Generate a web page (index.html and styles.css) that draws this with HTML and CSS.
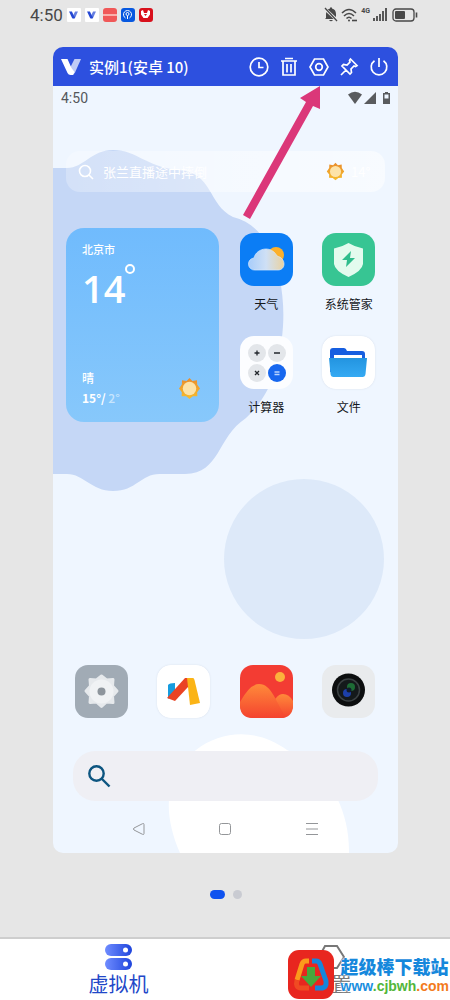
FILE: index.html
```html
<!DOCTYPE html>
<html lang="zh-CN">
<head>
  <meta charset="UTF-8" />
  <meta name="viewport" content="width=device-width, initial-scale=1" />
  <title>虚拟机</title>
  <link rel="stylesheet" href="styles.css">
</head>
<body>
<!-- Shared shapes -->
<svg class="defs" width="0" height="0" aria-hidden="true">
  <defs>
    <linearGradient id="sunFill" x1="0" y1="0" x2="0" y2="1">
      <stop offset="0" stop-color="#e98c2c"/><stop offset="1" stop-color="#f6bd2f"/>
    </linearGradient>
    <linearGradient id="cloudFill" x1="0" y1="0" x2="1" y2="0">
      <stop offset="0" stop-color="#a9cdfa"/><stop offset=".5" stop-color="#cfe0f5"/><stop offset="1" stop-color="#ead2a0"/>
    </linearGradient>
    <linearGradient id="folderFill" x1="0" y1="0" x2="0" y2="1">
      <stop offset="0" stop-color="#2394e0"/><stop offset="1" stop-color="#35aaf3"/>
    </linearGradient>
    <linearGradient id="hillFill" x1="0" y1="0" x2="0" y2="1">
      <stop offset="0" stop-color="#ff8a3a"/><stop offset="1" stop-color="#f4432f"/>
    </linearGradient>
    <linearGradient id="vmFill" x1="0" y1="0" x2="1" y2="0">
      <stop offset="0" stop-color="#6f8cff"/><stop offset="1" stop-color="#1f45dc"/>
    </linearGradient>
    <symbol id="sun" viewBox="0 0 24 24">
      <path fill="url(#sunFill)" d="M12 1l3 3.200 4.800-.9.2 4.400L23 12l-3 3.800.2 4.200-4.700.2L12 23l-3.500-2.800-4.700-.2.2-4.200L1 12l3-4.300.2-4.400 4.800.9z"/>
      <circle cx="12" cy="12" r="7" fill="#fde3a8"/>
    </symbol>
    <symbol id="vlogo" viewBox="0 0 20 18">
      <path class="v-left" d="M0 1h6.500l4 9 3 4-1.500 3H9.500Q7.500 17 6.500 15z"/>
      <path class="v-right" d="M13.500 1H20l-6 13.500Q12.800 17 10.500 17L9 10z"/>
    </symbol>
  </defs>
</svg>

<div class="page">
  <header class="statusbar">
    <span class="clock">4:50</span>
    <div class="notices">
      <span class="notice white"><svg width="9" height="8"><use href="#vlogo"/></svg></span>
      <span class="notice white"><svg width="9" height="8"><use href="#vlogo"/></svg></span>
      <span class="notice coral"></span>
      <span class="notice blue">
        <svg width="11" height="11" viewBox="0 0 11 11" fill="none" stroke="#fff"><path d="M3.500 9A4 4 0 1 1 7.500 9M5.500 10V7"/><circle cx="5.500" cy="5" r="1.500"/></svg>
      </span>
      <span class="notice red">
        <svg width="11" height="11" viewBox="0 0 11 11" fill="#fff"><path d="M1 2l2-1 1 3h3l1-3 2 1v3.500L7.500 9h-4L1 5.500z"/><path d="M4 5h3L5.500 7z" fill="#d8101c"/></svg>
      </span>
    </div>
    <div class="signals">
      <svg width="14" height="15" viewBox="0 0 14 15" fill="#484848"><path d="M2 11V7c0-3 1.500-5 4-5.500V.5h2v1c2.500.5 4 2.500 4 5.500v4l1 1H1zM5 13h4q-2 2.500-4 0z"/><path d="M0 1l14 13" stroke="#e6e6e6" stroke-width="3"/><path d="M1 1l12 13" stroke="#484848" stroke-width="1.300"/></svg>
      <svg width="17" height="14" viewBox="0 0 17 14" fill="none" stroke="#484848" stroke-width="1.600"><path d="M1 5q7-7 14 0M3 8q5-5 10 0M5.500 10.500q2.500-2.500 5 0"/><circle cx="8" cy="12.500" r="1" fill="#484848" stroke="none"/><path d="M11 12.500h5"/></svg>
      <span class="net">4G</span>
      <svg width="14" height="13" viewBox="0 0 14 13" stroke="#484848" stroke-width="1.800"><path d="M1 13v-3M4 13V8M7 13V6M10 13V3M13 13V0"/></svg>
      <svg class="battery" width="26" height="14" viewBox="0 0 26 14" fill="none" stroke="#484848"><rect x="1" y="1" width="21" height="12" rx="3" stroke-width="1.300"/><rect x="3" y="3" width="10" height="8" rx="1" fill="#484848" stroke="none"/><path d="M24.500 4.500v5" stroke-width="1.600"/></svg>
    </div>
  </header>

  <main class="stage">
    <section class="phone">
      <div class="titlebar">
        <svg class="brand" width="20" height="18"><use href="#vlogo"/></svg>
        <h1>实例1(安卓 10)</h1>
        <div class="tools">
          <button type="button" aria-label="定时"><svg viewBox="0 0 20 20"><circle cx="10" cy="10" r="8.800"/><path d="M10 5v5.500h4.500"/></svg></button>
          <button type="button" aria-label="删除"><svg viewBox="0 0 20 20"><path d="M2 4h16M6 1.500h8M4 4v14h12V4M8 7v8.500M12 7v8.500"/></svg></button>
          <button type="button" aria-label="设置"><svg viewBox="0 0 20 20"><path d="M5.500 2h9l4.500 8-4.500 8h-9L1 10z"/><circle cx="10" cy="10" r="3.300"/></svg></button>
          <button type="button" aria-label="置顶"><svg viewBox="0 0 20 20"><path d="M11.500 2l6.500 6.500-1.500 1-1.500-.5-3 3 .5 3.500-1.500 1.500L3 9l1.500-1.500 3.500.5 3-3-.5-1.500zM7 13l-5 5"/></svg></button>
          <button type="button" aria-label="关机"><svg viewBox="0 0 20 20"><path d="M10 1v9M5.500 3.700a7.800 7.800 0 1 0 9 0"/></svg></button>
        </div>
      </div>

      <div class="screen">
        <svg class="wallpaper" viewBox="0 0 345 767" preserveAspectRatio="none" aria-hidden="true">
          <path fill="#c5d7f6" d="M0 82H14C31 82 38 64 60 64C84 64 93 81 125 84C160 86 155 119 180 131C204 137 218 157 226 188C230 208 231 225 230 240C228 268 223 304 193 332C163 352 168 387 132 388H108C88 387 84 405 60 405C38 405 31 388 14 388H0z"/>
          <circle cx="251" cy="473" r="80" fill="#dde9f9"/>
          <path fill="#fff" d="M127 767C110 728 110 690 143 664C170 643 206 643 234 664C270 679 297 718 296 767z"/>
        </svg>

        <div class="inner-status">
          <span>4:50</span>
          <svg width="44" height="14" viewBox="0 0 44 14" fill="#595b5e"><path d="M0 3.500Q7-2 14 3.500L7 13z"/><path d="M28 1v12H16z"/><path d="M37 1h3v1h2v11h-7V2h2z"/><path d="M36.500 3.500h4v4h-4z" fill="#eef6ff"/></svg>
        </div>

        <div class="search">
          <svg width="16" height="16" viewBox="0 0 16 16" fill="none" stroke="#fff" stroke-width="1.600"><circle cx="7" cy="7" r="5.500"/><path d="M11 11l4 4"/></svg>
          <input type="search" aria-label="搜索" placeholder="张兰直播途中摔倒">
          <svg width="19" height="19"><use href="#sun"/></svg>
          <span class="search-temp">14°</span>
        </div>

        <div class="home">
          <article class="weather">
            <span class="city">北京市</span>
            <span class="temp">14<i></i></span>
            <div class="forecast">
              <div>
                <p>晴</p>
                <p><b>15°/</b> <span class="low">2°</span></p>
              </div>
              <svg width="23" height="23"><use href="#sun"/></svg>
            </div>
          </article>

          <button type="button" class="app">
            <svg viewBox="0 0 53 53"><rect width="53" height="53" rx="14" fill="#0b7df5"/><circle cx="36" cy="22" r="8" fill="#fcb02b"/><path fill="url(#cloudFill)" stroke="#d9e9fc" stroke-width=".7" d="M15 37a6 6 0 0 1-1-12c1-5 6-9 12-9 5 0 9 3 11 7 4 1 7 4 7 8 0 4-3 6-6 6z"/></svg>
            <span>天气</span>
          </button>
          <button type="button" class="app">
            <svg viewBox="0 0 53 53"><rect width="53" height="53" rx="14" fill="#37c593"/><path fill="#e3fbee" d="M26.500 10Q33 14 41 15.500V31Q40 38 26.500 44Q13 38 12 31V15.500Q20 14 26.500 10z"/><path fill="#2ebd8c" d="M29 18l-9 9h5l-1 7 9-9h-5z"/></svg>
            <span>系统管家</span>
          </button>
          <button type="button" class="app">
            <svg viewBox="0 0 53 53"><rect width="53" height="53" rx="14" fill="#fcfdff"/><g fill="#e3e6ea"><circle cx="17" cy="17" r="9"/><circle cx="37" cy="17" r="9"/><circle cx="17" cy="37" r="9"/></g><circle cx="37" cy="37" r="9" fill="#1767ef"/><g fill="none" stroke="#23272c" stroke-width="1.300"><path d="M14.500 17h5M17 14.500v5M34 17h6M15 35l4 4M19 35l-4 4"/><path stroke="#b9d4ff" d="M34.500 36h5M34.500 38.500h5"/></g></svg>
            <span>计算器</span>
          </button>
          <button type="button" class="app">
            <svg class="edged" viewBox="0 0 53 53"><rect width="53" height="53" rx="14" fill="#fff"/><path fill="#165ee0" d="M8 36V15q0-3 3-3h11q2 0 3 3h15q3 0 3 3v18z"/><path fill="#fff" d="M12 19h28v6H12z"/><path fill="url(#folderFill)" d="M7 22h38l-1.500 16q-.3 3-3 3h-29q-2.700 0-3-3z"/></svg>
            <span>文件</span>
          </button>
        </div>

        <div class="dock">
          <button type="button" class="app" aria-label="设置">
            <svg viewBox="0 0 53 53"><rect width="53" height="53" rx="13" fill="#a1abb5"/><path fill="#e6e9ec" stroke="#e6e9ec" stroke-width="3" stroke-linejoin="round" d="M26.500 11l5 4 6.500-.5-.5 6.500 4.500 5-4.500 5 .5 6.500-6.500-.5-5 4.500-5-4.500-6.500.5.5-6.500-4.500-5 4.500-5-.5-6.500 6.500.5z"/><circle cx="26.500" cy="26.500" r="12" fill="#f0f2f4"/><circle cx="26.500" cy="26.500" r="4" fill="#8e959c"/></svg>
          </button>
          <button type="button" class="app" aria-label="应用">
            <svg class="edged" viewBox="0 0 53 53"><rect width="53" height="53" rx="14" fill="#fff"/><path fill="#169cdf" d="M11 20q1-2 7-2v9l-7 7z"/><path fill="#ea4324" d="M28 13h3v9L18 36l-8-3z"/><path fill="#fbb416" d="M30 13h6q1 0 1.500 2L43 38l-10 2z"/></svg>
          </button>
          <button type="button" class="app" aria-label="相册">
            <svg viewBox="0 0 53 53"><rect width="53" height="53" rx="13" fill="#f33c33"/><circle cx="40" cy="12" r="5" fill="#fcb13c"/><path fill="url(#hillFill)" d="M30 46q5-17 13-17 6 0 10 7v4q0 13-13 13z"/><path fill="url(#hillFill)" d="M0 37q10-18 19-18c13 0 17 19 27 33q-2 1-6 1H13Q0 53 0 40z"/></svg>
          </button>
          <button type="button" class="app" aria-label="相机">
            <svg viewBox="0 0 53 53"><rect width="53" height="53" rx="14" fill="#e9ebed"/><circle cx="26.500" cy="25" r="16.500" fill="#0c0e0f"/><circle cx="26.500" cy="25" r="11" fill="#14191b" stroke="#3b4143" stroke-width="1.500"/><circle cx="29" cy="22" r="4" fill="#1d6b35"/><circle cx="25" cy="28" r="4" fill="#1c3fa8"/><circle cx="27" cy="25" r="2.500" fill="#111a2c"/></svg>
          </button>
        </div>

        <label class="finder">
          <svg width="24" height="24" viewBox="0 0 24 24" fill="none" stroke="#0d5580" stroke-width="2.400"><circle cx="9.500" cy="9.500" r="7.200"/><path d="M14.500 14.500l8 8"/></svg>
          <input type="search" aria-label="搜索应用">
        </label>

        <nav class="keys">
          <button type="button" aria-label="返回"><svg viewBox="0 0 14 14"><path d="M12 2.500v9q0 1.500-1.500.8L2 8Q.8 7 2 6l8.500-4.300Q12 1 12 2.500z"/></svg></button>
          <button type="button" aria-label="主页"><svg viewBox="0 0 14 14"><rect x="1.500" y="1.500" width="11" height="11" rx="2"/></svg></button>
          <button type="button" aria-label="菜单"><svg viewBox="0 0 14 14"><path d="M1 1.500h12M1 7h12M1 12.500h12"/></svg></button>
        </nav>
      </div>

      <!-- Pointer to the settings tool -->
      <svg class="pointer" width="80" height="135" viewBox="0 0 80 135" fill="#db3779" aria-hidden="true"><path d="M77 1v23l-7-3L7 134l-7-4L63 17l-6-4z"/></svg>
    </section>

    <div class="dots"><span class="active"></span><span></span></div>
  </main>

  <nav class="tabs">
    <a href="#vm" class="tab active">
      <svg width="27" height="26" viewBox="0 0 27 26"><rect width="27" height="12" rx="6" fill="url(#vmFill)"/><rect y="14" width="27" height="12" rx="6" fill="url(#vmFill)"/><circle cx="20.500" cy="6" r="2.500" fill="#fff"/><circle cx="20.500" cy="20" r="2.500" fill="#fff"/></svg>
      <span>虚拟机</span>
    </a>
    <a href="#settings" class="tab">
      <svg width="27" height="26" viewBox="0 0 27 26" fill="none" stroke="#777" stroke-width="2"><path d="M7 2h12l7 11-7 11H7L1 13z"/></svg>
      <span>设置</span>
    </a>
  </nav>

  <div class="stamp">
    <svg width="48" height="51" viewBox="0 0 48 51"><rect x="1" y="1" width="46" height="49" rx="11" fill="#e8261f"/><g fill="none" stroke-width="5" stroke-linejoin="round"><path stroke="#fb9a1c" d="M22 12h-3q-3 0-4 3L10 31"/><path stroke="#f04a22" d="M10 31q-2 8 4 8h8"/><path stroke="#1686dc" d="M25 12h4q3 0 4 3l6 17q1 7-5 7h-6"/></g><path fill="#48a83c" d="M20 18h8v9h6L24 38 14 27h6z"/></svg>
    <div>
      <strong>超级棒下载站</strong>
      <span class="url"><span>www</span><span class="green">.cjbwh</span><span class="orange">.com</span></span>
    </div>
  </div>
</div>
</body>
</html>
```
FILE: styles.css
```css
* {
  box-sizing: border-box;
}
body {
  margin: 0;
  font-family: "Noto Sans CJK SC", sans-serif;
  background-color: #e6e6e6;
}
button, input {
  font: inherit;
  border: 0;
  padding: 0;
  background: none;
}
button {
  cursor: pointer;
}
svg {
  display: block;
  flex: none;
}
p {
  margin: 0;
}
.defs {
  position: absolute;
}
.page {
  position: relative;
  display: flex;
  flex-direction: column;
  min-height: 100vh;
}

/* Device status bar */
.statusbar {
  display: flex;
  align-items: center;
  height: 29px;
  padding: 0 32px 0 30px;
  color: #484848;
}
.clock {
  font: 17px/24px Roboto, sans-serif;
}
.notices {
  display: flex;
  gap: 4px;
  margin-left: 4px;
}
.notice {
  display: flex;
  align-items: center;
  justify-content: center;
  width: 14px;
  height: 14px;
  border-radius: 3px;
}
.notice.white {
  background-color: #fff;
  border-radius: 1px;
  fill: #2548d3;
}
.notice.coral {
  background: linear-gradient(#f05858 45%, #f9b0ab 45%, #f9b0ab 60%, #f05858 60%);
}
.notice.blue {
  background-color: #0758e0;
}
.notice.red {
  background-color: #d8101c;
}
.signals {
  display: flex;
  align-items: center;
  gap: 3px;
  margin-left: auto;
}
.net {
  align-self: flex-start;
  font: bold 7px/8px Roboto, sans-serif;
}
.battery {
  margin-left: 2px;
}

/* Phone preview */
.stage {
  flex: 1;
  padding: 18px 52px 0 53px;
}
.phone {
  position: relative;
  border-radius: 10px;
}
.titlebar {
  display: flex;
  align-items: center;
  height: 39px;
  padding: 0 9px 0 8px;
  border-radius: 10px 10px 0 0;
  background-color: #2d50df;
  color: #fff;
}
.brand {
  fill: #fff;
}
.v-right {
  opacity: .7;
}
h1 {
  margin: 0 0 0 8px;
  font-size: 15px;
  font-weight: 500;
  line-height: 22px;
}
.tools {
  display: flex;
  gap: 10px;
  margin-left: auto;
}
.tools svg {
  width: 20px;
  height: 20px;
  fill: none;
  stroke: #fff;
  stroke-width: 1.700;
}
.screen {
  position: relative;
  display: flex;
  flex-direction: column;
  overflow: hidden;
  border-radius: 0 0 10px 10px;
  background-color: #eff6ff;
}
.wallpaper {
  position: absolute;
  width: 100%;
  height: 100%;
}
.screen > :not(.wallpaper) {
  position: relative;
}
.inner-status {
  display: flex;
  align-items: center;
  justify-content: space-between;
  height: 24px;
  padding: 0 6px 0 8px;
  color: #54575b;
  font: 14px/20px Roboto, sans-serif;
}
.search {
  display: flex;
  align-items: center;
  height: 41px;
  margin: 41px 13px 0;
  padding: 0 12px;
  border-radius: 14px;
  background: linear-gradient(90deg, rgba(255, 255, 255, .25), rgba(255, 255, 255, .55));
  color: #fff;
  font-size: 13px;
}
.search input {
  flex: 1;
  min-width: 0;
  margin-left: 9px;
}
.search input::placeholder {
  color: #fff;
  opacity: 1;
}
.search-temp {
  width: 22px;
  margin-left: 6px;
}
.home, .dock {
  display: grid;
  grid-template-columns: repeat(4, 1fr);
  padding: 0 8px 0 7px;
}
.home {
  grid-template-rows: 103px 103px;
  margin-top: 36px;
}
.weather {
  grid-column: span 2;
  grid-row: span 2;
  display: flex;
  flex-direction: column;
  height: 194px;
  margin: 0 6px;
  padding: 12px 16px 14px;
  border-radius: 18px;
  background: linear-gradient(#70bbfd, #87c8fb);
  color: #fff;
}
.city {
  font-size: 11px;
  font-weight: 500;
  line-height: 18px;
}
.temp {
  display: flex;
  font: 600 38px/48px "Open Sans", sans-serif;
  margin-top: 6px;
}
.temp i {
  width: 10px;
  height: 10px;
  border: 2px solid #fff;
  border-radius: 50%;
}
.forecast {
  display: flex;
  align-items: center;
  justify-content: space-between;
  margin-top: auto;
  padding-right: 2px;
  font-size: 12px;
  font-weight: 500;
  line-height: 20px;
}
.low {
  opacity: .55;
}
.app {
  display: flex;
  flex-direction: column;
  align-items: center;
  color: #15181c;
  font-size: 12px;
  line-height: 18px;
}
.app svg {
  width: 53px;
  height: 53px;
}
.home .app {
  padding-top: 5px;
}
.app span {
  margin-top: 9px;
  white-space: nowrap;
}
.edged {
  border-radius: 14px;
  box-shadow: 0 0 2px #d9dfe8;
}
.dock {
  margin-top: 231px;
}
.finder {
  display: flex;
  align-items: center;
  height: 50px;
  margin: 33px 20px 0;
  padding: 0 14px;
  border-radius: 22px;
  background-color: #efeff4;
}
.finder input {
  flex: 1;
  min-width: 0;
}
.keys {
  display: flex;
  justify-content: space-around;
  align-items: center;
  height: 52px;
  padding: 4px 43px 0;
}
.keys svg {
  width: 14px;
  height: 14px;
  fill: none;
  stroke: #949699;
}
.pointer {
  position: absolute;
  top: 38px;
  right: 75px;
}
.dots {
  display: flex;
  justify-content: center;
  gap: 8px;
  padding: 37px 0 38px;
}
.dots span {
  width: 9px;
  height: 9px;
  border-radius: 5px;
  background-color: #c9cbd2;
}
.dots .active {
  width: 15px;
  background-color: #0f52ef;
}

/* Bottom tabs */
.tabs {
  display: flex;
  height: 64px;
  padding: 0 12px;
  border-top: 2px solid #cecece;
  background-color: #fff;
}
.tab {
  flex: 1;
  display: flex;
  flex-direction: column;
  align-items: center;
  padding-top: 5px;
  color: #777;
  font-size: 20px;
  line-height: 28px;
  text-decoration: none;
}
.tab.active {
  color: #2147c8;
}

/* Site stamp over the tab bar */
.stamp {
  position: absolute;
  right: 1px;
  bottom: 1px;
  display: flex;
  align-items: center;
  gap: 6px;
  white-space: nowrap;
}
.stamp strong {
  display: block;
  color: #1688dc;
  font-size: 18px;
  font-weight: 900;
  line-height: 22px;
  text-shadow: 0 0 2px #fff, 0 0 2px #fff;
}
.url {
  display: block;
  color: #1b8fe0;
  font: bold 14px/18px "Liberation Sans", sans-serif;
  text-shadow: 0 0 1px #fff, 0 0 2px #fff, 0 0 3px #fff;
}
.green {
  color: #52b63a;
}
.orange {
  color: #f37a1c;
}
```
